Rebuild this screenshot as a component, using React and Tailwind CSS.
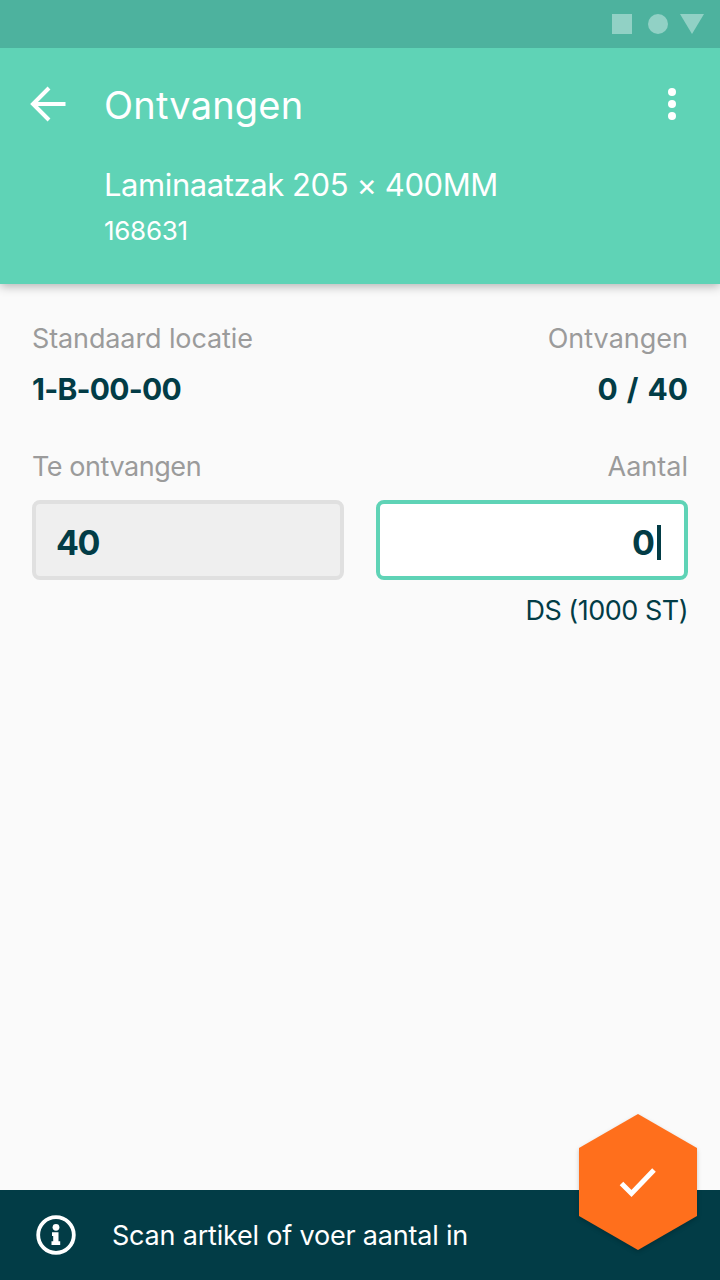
import { useState } from 'react';

function StatusBar() {
    return (
        <div className="relative z-10 flex h-12 shrink-0 items-center justify-end bg-[#4db29e] pr-4">
            <svg className="h-5 w-[92px]" viewBox="0 0 92 20" fill="#91d1c5">
                <rect width="20" height="20" />
                <circle cx="46" cy="10" r="10" />
                <path d="M68 0H92L80 20Z" />
            </svg>
        </div>
    );
}

function Header({ title, article, code }) {
    return (
        <header className="h-[236px] shrink-0 bg-[#5fd3b6] text-white shadow-[0_2px_10px_rgba(0,0,0,0.3)]">
            <div className="flex h-28 items-center pr-10 pl-[30px]">
                <button aria-label="Terug">
                    <svg className="block h-9 w-9" viewBox="0 0 36 36" fill="none" stroke="white" strokeWidth="4">
                        <path d="M35.5 18H3M19 2L3 18L19 34" />
                    </svg>
                </button>
                <h1 className="ml-[38px] pt-px text-[38px] leading-[48px] tracking-[0.2px]">{title}</h1>
                <button aria-label="Meer" className="ml-auto">
                    <svg className="block h-8 w-4" viewBox="0 0 16 32" fill="white">
                        <circle cx="8" cy="4" r="4" />
                        <circle cx="8" cy="16" r="4" />
                        <circle cx="8" cy="28" r="4" />
                    </svg>
                </button>
            </div>
            <div className="pl-[104px]">
                <p className="mt-[3px] text-[31px] leading-[44px] tracking-[-0.42px]">{article}</p>
                <p className="mt-0.5 text-[26px] leading-[44px] tracking-[-0.3px]">{code}</p>
            </div>
        </header>
    );
}

function Label({ children, className = 'tracking-normal' }) {
    return <p className={`text-[27px] leading-9 text-[#9b9b9b] ${className}`}>{children}</p>;
}

export default function App() {
    const [amount] = useState('0');

    return (
        <div className="flex h-[1280px] w-[720px] flex-col overflow-hidden bg-[#fafafa] font-['Inter',sans-serif] text-[#023c46]">
            <StatusBar />
            <Header title="Ontvangen" article="Laminaatzak 205 × 400MM" code="168631" />

            <main className="grow px-8 pt-[37px]">
                <div className="flex justify-between">
                    <div>
                        <Label className="tracking-[-0.12px]">Standaard locatie</Label>
                        <p className="mt-[11px] text-[30px] leading-[42px] font-bold tracking-[-0.75px]">1-B-00-00</p>
                    </div>
                    <div className="text-right">
                        <Label>Ontvangen</Label>
                        <p className="mt-[11px] text-[30px] leading-[42px] font-bold [word-spacing:2px]">0 / 40</p>
                    </div>
                </div>

                <div className="mt-[39px] grid grid-cols-2 gap-8">
                    <div>
                        <Label className="tracking-[-0.45px]">Te ontvangen</Label>
                        <div className="mt-[15px] flex h-20 items-center rounded-lg border-4 border-[#e0e0e0] bg-[#efefef] px-5 pt-1 text-[34px] font-bold tracking-[-1.5px]">
                            40
                        </div>
                    </div>
                    <div className="text-right">
                        <Label>Aantal</Label>
                        <div className="mt-[15px] flex h-20 items-center justify-end rounded-lg border-4 border-[#5fd3b6] bg-white pt-1 pr-[23px] pl-5 text-[34px] font-bold">
                            <span>{amount}</span>
                            <span className="ml-0.5 h-[35px] w-1 bg-[#023c46]" />
                        </div>
                        <p className="mt-[13px] text-[27px] leading-9 tracking-[-0.5px]">DS (1000 ST)</p>
                    </div>
                </div>
            </main>

            <footer className="relative flex h-[90px] shrink-0 items-center bg-[#023c46] pl-9 text-white">
                <svg className="h-10 w-10" viewBox="0 0 40 40">
                    <circle cx="20" cy="20" r="17.8" fill="none" stroke="white" strokeWidth="3.8" />
                    <circle cx="20" cy="12.3" r="3.4" fill="white" />
                    <path d="M16 17.3H22.5V26.3H24.2V30H15.5V26.3H17.2V21H16Z" fill="white" />
                </svg>
                <p className="ml-9 pt-0.5 text-[27px] leading-9 tracking-[-0.2px]">
                    Scan artikel of voer aantal in
                </p>

                {/* Confirm button, overlaps the bar */}
                <button aria-label="Bevestigen" className="absolute right-[23px] bottom-[30px]">
                    <svg
                        className="block h-[136px] w-[118px] drop-shadow-[0_2px_2px_rgba(0,0,0,0.2)]"
                        viewBox="0 0 118 136"
                    >
                        <path d="M59 0L118 34V102L59 136L0 102V34Z" fill="#ff6f1c" />
                        <path d="M42.5 69.5L52.5 79.5L75 56" fill="none" stroke="white" strokeWidth="5" />
                    </svg>
                </button>
            </footer>
        </div>
    );
}
